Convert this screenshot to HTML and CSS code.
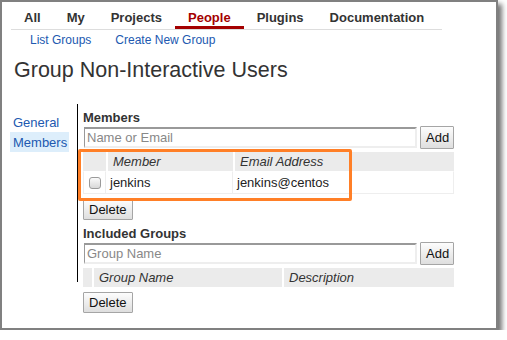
FILE: index.html
```html
<!DOCTYPE html>
<html lang="en">
<head>
    <meta charset="UTF-8">
    <title>Group Non-Interactive Users</title>
    <link rel="stylesheet" href="styles.css">
</head>
<body>
    <div class="window">
        <!-- top tabs -->
        <ul class="tabs">
            <li>All</li>
            <li>My</li>
            <li>Projects</li>
            <li class="active">People</li>
            <li>Plugins</li>
            <li>Documentation</li>
        </ul>
        <div class="subnav">
            <a href="#">List Groups</a>
            <a href="#">Create New Group</a>
        </div>
        <h1 class="title">Group Non-Interactive Users</h1>

        <div class="main">
            <div class="sidebar">
                <a href="#" class="side-link">General</a>
                <a href="#" class="side-link selected">Members</a>
            </div>
            <div class="content">
                <!-- members -->
                <h3>Members</h3>
                <div class="add-row">
                    <input type="text" class="add-input" placeholder="Name or Email">
                    <button class="btn">Add</button>
                </div>
                <table class="list members">
                    <tr>
                        <th class="c-check"></th>
                        <th class="c-name">Member</th>
                        <th class="c-email">Email Address</th>
                    </tr>
                    <tr>
                        <td class="c-check"><input type="checkbox" class="check"></td>
                        <td>jenkins</td>
                        <td>jenkins@centos</td>
                    </tr>
                </table>
                <button class="btn delete">Delete</button>

                <!-- included groups -->
                <h3>Included Groups</h3>
                <div class="add-row">
                    <input type="text" class="add-input" placeholder="Group Name">
                    <button class="btn">Add</button>
                </div>
                <table class="list groups">
                    <tr>
                        <th class="c-check"></th>
                        <th class="c-group">Group Name</th>
                        <th class="c-desc">Description</th>
                    </tr>
                </table>
                <button class="btn delete">Delete</button>
            </div>
        </div>

        <div class="highlight"></div>
    </div>
</body>
</html>
```

FILE: styles.css
```css
* {
    margin: 0;
    padding: 0;
    box-sizing: border-box;
}
body {
    font-family: "Liberation Sans", Arial, sans-serif;
    font-size: 13px;
    color: #333;
    background-color: #fff;
}
a {
    color: #2159b0;
    text-decoration: none;
}

/* screenshot frame */
.window {
    position: relative;
    width: 498px;
    height: 330px;
    border: 2px solid #808080;
    background-color: #fff;
    box-shadow: 4px 4px 5px rgba(0, 0, 0, 0.55);
}

/* tabs */
.tabs {
    display: flex;
    list-style: none;
    width: 431px;
    margin-left: 9px;
    padding-top: 8px;
    border-bottom: 1px solid #ddd;
}
.tabs li {
    padding: 0 13px;
    line-height: 16px;
    font-weight: bold;
    color: #333;
    border-bottom: 3px solid transparent;
}
.tabs li.active {
    color: #a40000;
    border-bottom-color: #a40000;
}
.subnav {
    display: flex;
    gap: 24px;
    margin-top: 3px;
    padding-left: 28px;
    font-size: 12px;
    line-height: 15px;
}
.title {
    margin: 10px 0 0 12px;
    font-size: 21.5px;
    line-height: 25px;
    font-weight: normal;
    color: #333;
}

/* sidebar + content */
.main {
    display: flex;
    align-items: flex-start;
    margin-top: 21px;
}
.sidebar {
    display: flex;
    flex-direction: column;
    width: 68px;
    height: 178px;
    margin-left: 8px;
    padding-top: 8px;
    border-right: 1px solid #000;
}
.side-link {
    width: 59px;
    padding: 2px 3px 0;
    line-height: 18px;
}
.side-link.selected {
    background-color: #ddeefb;
}
.content {
    width: 376px;
    padding-left: 5px;
}
h3 {
    padding-top: 5px;
    font-size: 13px;
    line-height: 17px;
    color: #333;
}
.add-row {
    display: flex;
    align-items: center;
    gap: 3px;
}
.add-input {
    width: 333px;
    height: 21px;
    margin-left: 1px;
    padding: 0 2px;
    font-family: inherit;
    font-size: 13px;
    border-style: solid;
    border-width: 2px 2px 2px 1px;
    border-color: #999 #eee #eee #999;
    outline: none;
}
.add-input::placeholder {
    color: #888;
}
.btn {
    height: 23px;
    padding: 0 5px;
    font-family: inherit;
    font-size: 13px;
    color: #111;
    border: 1px solid #a5a5a5;
    border-radius: 1px;
    background: linear-gradient(#fdfdfd, #dedede);
}
.add-row .btn {
    width: 34px;
}
.delete {
    display: block;
    height: 21px;
    margin-top: 5px;
}

/* lists */
.list {
    width: 371px;
    margin-top: 3px;
    border-collapse: separate;
    border-spacing: 0;
    table-layout: fixed;
}
.list th {
    height: 19px;
    padding: 1px 0 0 7px;
    line-height: 18px;
    text-align: left;
    font-weight: normal;
    font-style: italic;
    color: #333;
    background-color: #ebebeb;
}
.list th + th {
    padding-left: 5px;
    border-left: 2px solid #fff;
}
.list td {
    height: 23px;
    padding-left: 4px;
    line-height: 21px;
    color: #222;
    border: 1px solid #eee;
    border-top-color: #fff;
}
.list td + td {
    border-left: 0;
}
.members .c-check { width: 23px; }
.members .c-name { width: 127px; }
.groups .c-check { width: 9px; }
.groups .c-group { width: 190px; }
.list td.c-check {
    padding-left: 5px;
}
.check {
    appearance: none;
    display: block;
    width: 12px;
    height: 12px;
    border: 1px solid #9a9a9a;
    border-radius: 3px;
    background: linear-gradient(#fafafa, #d8d8d8);
}

/* orange annotation box */
.highlight {
    position: absolute;
    left: 76px;
    top: 147px;
    width: 274px;
    height: 52px;
    border: 3px solid #ff7f27;
    border-radius: 2px;
}
```
